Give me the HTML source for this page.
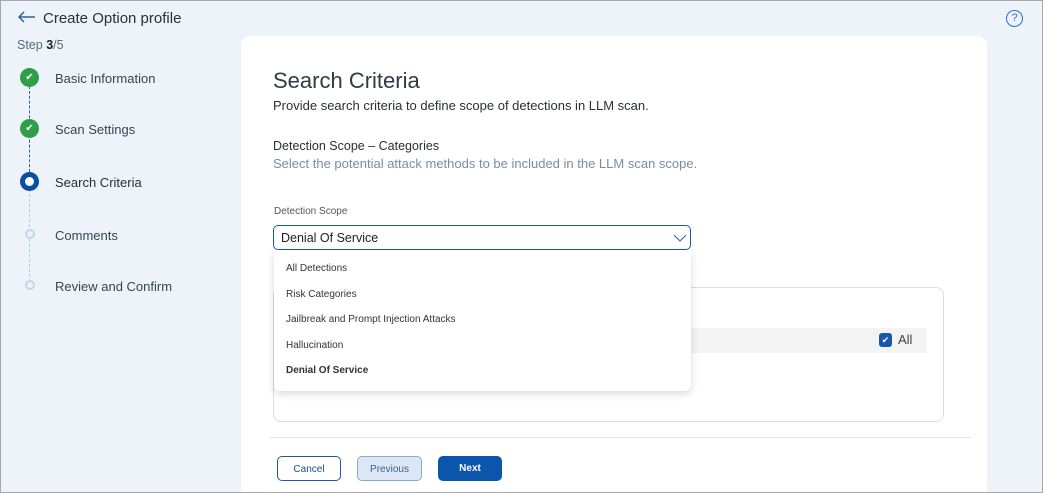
<!DOCTYPE html><html><head><style>
*{box-sizing:border-box;margin:0;padding:0}
html{width:1043px;height:493px;overflow:hidden}
body{width:1043px;height:493px;overflow:hidden;background:#eef2f9;font-family:"Liberation Sans",sans-serif;position:relative}
.a{position:absolute;white-space:nowrap}
.t{margin-top:2px}
</style></head><body>
<svg class="a" style="left:18px;top:11px" width="18" height="12"><path d="M1 6 H17 M6 1 L1 6 L6 11" fill="none" stroke="#2a5fa8" stroke-width="1.5"/></svg>
<div class="a t" style="left:43px;top:8px;font-size:15px;color:#2b2f36">Create Option profile</div>
<div class="a" style="left:1006px;top:10px;width:17px;height:17px;border:1.5px solid #2a6fc4;border-radius:50%;color:#2a6fc4;font-size:11px;text-align:center;line-height:14px">?</div>
<div class="a t" style="left:17px;top:36px;font-size:12.5px;color:#5a6a7a">Step <b style="color:#222">3</b>/5</div>
<div class="a" style="left:29px;top:86px;height:86px;border-left:1.5px dashed #2a5fa8"></div>
<div class="a" style="left:29px;top:189px;height:98px;border-left:1.5px dashed #b8cce4"></div>
<div class="a" style="left:20px;top:68px;width:19px;height:19px;border-radius:50%;background:#2e9e48;color:#fff;font-size:10px;text-align:center;line-height:19px">✔</div>
<div class="a" style="left:20px;top:119px;width:19px;height:19px;border-radius:50%;background:#2e9e48;color:#fff;font-size:10px;text-align:center;line-height:19px">✔</div>
<div class="a" style="left:20px;top:172px;width:19px;height:19px;border-radius:50%;background:#0b4fa0"><div style="margin:5px;width:9px;height:9px;border-radius:50%;background:#fff"></div></div>
<div class="a" style="left:25px;top:229px;width:10px;height:10px;border-radius:50%;border:2px solid #c3d6ec;background:#eef2f9"></div>
<div class="a" style="left:25px;top:280px;width:10px;height:10px;border-radius:50%;border:2px solid #c3d6ec;background:#eef2f9"></div>
<div class="a t" style="left:55px;top:69px;font-size:13px;color:#3a4452">Basic Information</div>
<div class="a t" style="left:55px;top:120px;font-size:13px;color:#3a4452">Scan Settings</div>
<div class="a t" style="left:55px;top:173px;font-size:13px;color:#2b2f36">Search Criteria</div>
<div class="a t" style="left:55px;top:226px;font-size:13px;color:#3a4452">Comments</div>
<div class="a t" style="left:55px;top:277px;font-size:13px;color:#3a4452">Review and Confirm</div>
<div class="a" style="left:241px;top:36px;width:746px;height:470px;background:#fff;border-radius:10px"></div>
<div class="a t" style="left:273px;top:66px;font-size:22px;color:#333a44">Search Criteria</div>
<div class="a t" style="left:273px;top:96px;font-size:13px;color:#2b2f36">Provide search criteria to define scope of detections in LLM scan.</div>
<div class="a t" style="left:273px;top:137px;font-size:12.5px;color:#2b2f36">Detection Scope – Categories</div>
<div class="a t" style="left:273px;top:154px;font-size:13px;color:#7a8ca4">Select the potential attack methods to be included in the LLM scan scope.</div>
<div class="a" style="left:274px;top:206px;font-size:10px;color:#555">Detection Scope</div>
<div class="a" style="left:273px;top:225px;width:418px;height:25px;border:1.5px solid #1a5aa8;border-radius:5px"></div>
<div class="a t" style="left:281px;top:229px;font-size:12.5px;color:#222">Denial Of Service</div>
<svg class="a" style="left:673px;top:234px" width="14" height="9"><path d="M1 1 L7 7 L13 1" fill="none" stroke="#3a6fb4" stroke-width="1.2"/></svg>
<div class="a" style="left:273px;top:287px;width:671px;height:135px;border:1px solid #dcdcdc;border-radius:8px"></div>
<div class="a" style="left:680px;top:328px;width:247px;height:25px;background:#f3f3f3"></div>
<div class="a" style="left:879px;top:333px;width:13px;height:14px;background:#1758ac;border-radius:3px;color:#fff;font-size:9px;text-align:center;line-height:14px">✔</div>
<div class="a" style="left:898px;top:332px;font-size:13px;color:#444">All</div>
<div class="a" style="left:274px;top:250px;width:417px;height:141px;background:#fff;border-radius:0 0 6px 6px;box-shadow:0 3px 8px rgba(0,0,0,.15)"></div>
<div class="a" style="left:286px;top:263px;font-size:10px;color:#333">All Detections</div>
<div class="a" style="left:286px;top:289px;font-size:10px;color:#333">Risk Categories</div>
<div class="a" style="left:286px;top:314px;font-size:10px;color:#333">Jailbreak and Prompt Injection Attacks</div>
<div class="a" style="left:286px;top:340px;font-size:10px;color:#333">Hallucination</div>
<div class="a" style="left:286px;top:365px;font-size:10px;color:#333;font-weight:bold">Denial Of Service</div>
<div class="a" style="left:270px;top:437px;width:701px;border-top:1px solid #e4e4e4"></div>
<div class="a" style="left:277px;top:456px;width:64px;height:25px;border:1px solid #1a5aa8;border-radius:5px;font-size:10px;color:#1a4f90;text-align:center;line-height:25px">Cancel</div>
<div class="a" style="left:357px;top:456px;width:65px;height:25px;border:1px solid #8aa8d0;background:#dce7f5;border-radius:5px;font-size:10px;color:#3b5f90;text-align:center;line-height:25px">Previous</div>
<div class="a" style="left:438px;top:456px;width:64px;height:25px;background:#0b55ad;border-radius:5px;font-size:10px;color:#fff;font-weight:bold;text-align:center;line-height:26px">Next</div>
<div class="a" style="left:0;top:0;width:1043px;height:493px;border:1px solid #a8a8a8"></div>
</body></html>
